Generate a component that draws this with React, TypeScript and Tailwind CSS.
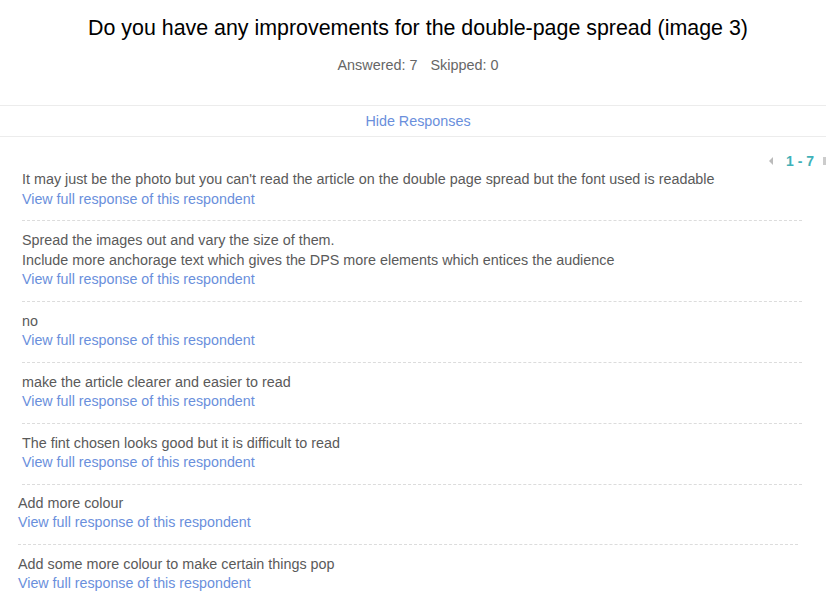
import React from "react";

interface IResponse {
  lines: string[];
}

const responses: IResponse[] = [
  {
    lines: [
      "It may just be the photo but you can't read the article on the double page spread but the font used is readable",
    ],
  },
  {
    lines: [
      "Spread the images out and vary the size of them.",
      "Include more anchorage text which gives the DPS more elements which entices the audience",
    ],
  },
  { lines: ["no"] },
  { lines: ["make the article clearer and easier to read"] },
  { lines: ["The fint chosen looks good but it is difficult to read"] },
];

const moreResponses: IResponse[] = [
  { lines: ["Add more colour"] },
  { lines: ["Add some more colour to make certain things pop"] },
];

const ResponseItem: React.FC<{ item: IResponse; last?: boolean }> = ({
  item,
  last,
}) => (
  <div
    className={`pt-[10px] pb-[11px] ${
      last ? "" : "border-b border-dashed border-[#dcdcdc]"
    }`}
  >
    {item.lines.map((line, i) => (
      <div key={i} className="text-[14.35px] leading-[19.5px] text-[#5a5a5a]">
        {line}
      </div>
    ))}
    <a
      href="#"
      className="block text-[14.25px] leading-[19.5px] text-[#6a8fdc] hover:underline"
    >
      View full response of this respondent
    </a>
  </div>
);

const App: React.FC = () => {
  return (
    <div
      className="w-[826px] h-[601px] overflow-hidden bg-white"
      style={{ fontFamily: '"Liberation Sans", Arial, sans-serif' }}
    >
      <div className="pl-[10px] pt-[14px] text-center">
        <h1 className="text-[21.4px] leading-[28px] text-black">
          Do you have any improvements for the double-page spread (image 3)
        </h1>
        <div className="mt-[13px] flex justify-center gap-[13px] text-[14.4px] leading-[20px] text-[#666]">
          <span>Answered: 7</span>
          <span>Skipped: 0</span>
        </div>
      </div>

      <div className="mt-[30px] border-y border-[#ececec] pt-[3px] pb-[3px] pl-[10px] text-center">
        <a href="#" className="text-[14.35px] leading-[20px] text-[#6a8fdc]">
          Hide Responses
        </a>
      </div>

      <div className="mt-[15px] flex h-[18px] items-center justify-end">
        <span className="mr-[13px] h-0 w-0 border-y-[4px] border-r-[4px] border-y-transparent border-r-[#bbb]" />
        <span className="text-[14px] font-bold leading-[18px] text-[#3fb1b8]">
          1 - 7
        </span>
        <span className="ml-[9px] h-[8px] w-[3px] bg-[#ccc]" />
      </div>

      <div className="-mt-[10px] ml-[22px] w-[780px]">
        {responses.map((r, i) => (
          <ResponseItem key={i} item={r} />
        ))}
      </div>
      <div className="-mt-[1px] ml-[18px] w-[780px]">
        {moreResponses.map((r, i) => (
          <ResponseItem key={i} item={r} last={i === moreResponses.length - 1} />
        ))}
      </div>
    </div>
  );
};

export default App;
